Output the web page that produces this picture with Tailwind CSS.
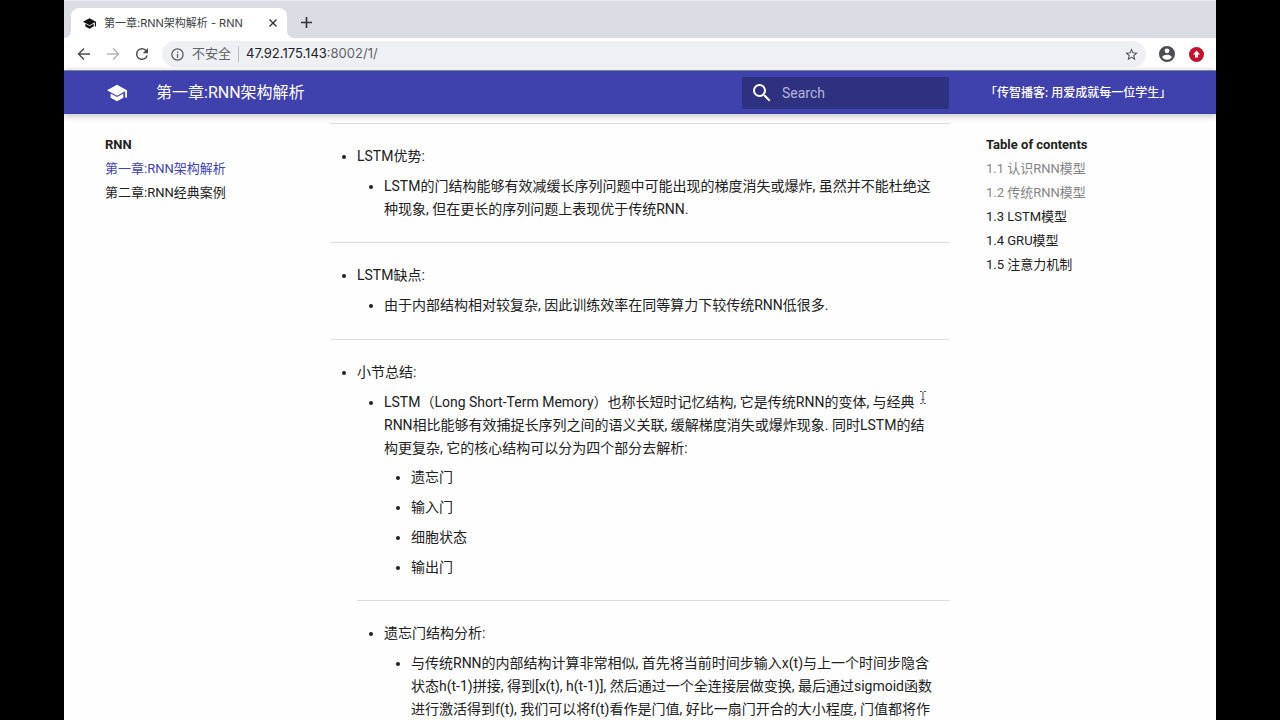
<!DOCTYPE html>
<html lang="zh-CN">
<head>
<meta charset="utf-8">
<meta name="viewport" content="width=device-width, initial-scale=1">
<title>第一章:RNN架构解析 - RNN</title>
<script src="https://cdn.jsdelivr.net/npm/@tailwindcss/browser@4"></script>
</head>
<body class="flex h-screen flex-col overflow-hidden bg-black px-16 font-[Roboto,'Noto_Sans_CJK_SC',sans-serif] text-[#212121]">

<!-- Browser window -->
<div class="flex h-[38px] shrink-0 items-end border-t border-[#e6e8ec] bg-[#dadce4] font-[Inter,'Noto_Sans_CJK_SC',sans-serif]">
  <svg class="h-[7px] w-[7px] shrink-0" viewBox="0 0 7 7" fill="#fff"><path d="M7 0v7H0A7 7 0 0 0 7 0Z"/></svg>
  <div class="flex h-[30px] w-[216px] shrink-0 items-center rounded-t-lg bg-white pr-[6px] pl-3">
    <svg class="mr-2 h-[13px] w-[13px] shrink-0" viewBox="1 1 22 22" fill="#111"><path d="M12 3 1 9l11 6 9-4.910V17h2V9M5 12.600v4.600L12 21l7-3.800v-4.600L12 16.400Z"/></svg>
    <span class="flex-1 whitespace-nowrap text-[11px] text-[#3c4043]">第一章:RNN架构解析 - RNN</span>
    <button class="flex h-4 w-4 items-center justify-center" aria-label="关闭标签页"><svg class="h-2 w-2" viewBox="0 0 8 8" stroke="#303236" stroke-width="1.4"><path d="M.5.5l7 7M7.500.5l-7 7"/></svg></button>
  </div>
  <svg class="h-[7px] w-[7px] shrink-0" viewBox="0 0 7 7" fill="#fff"><path d="M0 0v7h7A7 7 0 0 1 0 0Z"/></svg>
  <button class="ml-1 flex h-8 w-4 items-center justify-center" aria-label="新标签页"><svg class="h-[11px] w-[11px]" viewBox="0 0 11 11" stroke="#303236" stroke-width="1.6"><path d="M5.500 0v11M0 5.500h11"/></svg></button>
</div>
<div class="flex h-[33px] shrink-0 items-center border-b border-[#8d92a8] bg-white pr-3 pl-3 font-[Inter,'Noto_Sans_CJK_SC',sans-serif]">
  <button class="flex h-4 w-4 items-center justify-center" aria-label="后退"><svg class="h-4 w-4" viewBox="0 0 16 16" fill="none" stroke="#4a4d52" stroke-width="1.5"><path d="M14 8H3M8 2.500 2.500 8 8 13.500"/></svg></button>
  <button class="ml-[13px] flex h-4 w-4 items-center justify-center" aria-label="前进"><svg class="h-4 w-4" viewBox="0 0 16 16" fill="none" stroke="#b4b6ba" stroke-width="1.5"><path d="M2 8h11M8 2.500 13.500 8 8 13.500"/></svg></button>
  <button class="ml-[13px] flex h-4 w-4 items-center justify-center" aria-label="重新加载"><svg class="h-[18px] w-[18px] shrink-0" viewBox="0 0 24 24" fill="#4a4d52"><path d="M17.650 6.350A7.960 7.960 0 0 0 12 4a8 8 0 1 0 7.730 10h-2.080A6 6 0 1 1 12 6c1.660 0 3.140.69 4.220 1.780L13 11h7V4l-2.350 2.350Z"/></svg></button>
  <div class="ml-3 flex h-[26px] min-w-0 flex-1 items-center rounded-full bg-[#eff0f4] pr-[7px] pl-2">
    <svg class="h-[15px] w-[15px] shrink-0" viewBox="0 0 24 24" fill="#55585d"><path d="M11 17h2v-6h-2v6Zm0-8h2V7h-2v2Zm1-7a10 10 0 1 0 0 20 10 10 0 0 0 0-20Zm0 18a8 8 0 1 1 0-16 8 8 0 0 1 0 16Z"/></svg>
    <span class="ml-[7px] text-[13px] text-[#5f6368]">不安全</span>
    <span class="mx-[7px] h-4 w-px bg-[#b9bcc2]"></span>
    <div class="flex-1 text-[13px] text-[#606368]" role="textbox" aria-label="地址" tabindex="0"><span class="text-[#202124]">47.92.175.143</span>:8002/1/</div>
    <button class="flex h-4 w-4 items-center justify-center" aria-label="收藏"><svg class="h-[15px] w-[15px] shrink-0" viewBox="0 0 24 24" fill="#4a4d52"><path d="m22 9.240-7.190-.62L12 2 9.190 8.630 2 9.240l5.460 4.730L5.820 21 12 17.270 18.180 21l-1.630-7.030L22 9.240ZM12 15.400l-3.760 2.270 1-4.280-3.320-2.880 4.380-.38L12 6.100l1.710 4.040 4.380.38-3.320 2.880 1 4.280L12 15.400Z"/></svg></button>
  </div>
  <button class="ml-3 flex h-[18px] w-[18px] items-center justify-center" aria-label="用户"><svg class="h-4 w-4" viewBox="2 2 20 20" fill="#4a4d52"><path d="M12 2a10 10 0 1 0 0 20 10 10 0 0 0 0-20Zm0 3a3 3 0 1 1 0 6 3 3 0 0 1 0-6Zm0 14.200a7.200 7.200 0 0 1-6-3.220c.03-1.990 4-3.080 6-3.080s5.970 1.090 6 3.080a7.200 7.200 0 0 1-6 3.220Z"/></svg></button>
  <button class="ml-3 flex h-4 w-4 items-center justify-center" aria-label="更新"><svg class="h-[15px] w-[15px] shrink-0" viewBox="0 0 15 15"><circle cx="7.500" cy="7.500" r="7.500" fill="#c5112b"/><path fill="#fff" d="M7.500 3.500 11 7.500H9v3H6v-3H4Z"/></svg></button>
</div>

<!-- Site header -->
<header class="z-10 flex h-[43px] shrink-0 items-center bg-[#3f41ad] pr-[51px] pl-[43px] text-white shadow-[0_1px_7px_rgba(0,0,0,0.3)]">
  <a href="#" aria-label="RNN"><svg class="h-5 w-5" viewBox="1 1 22 22" fill="#fff"><path d="M12 3 1 9l11 6 9-4.910V17h2V9M5 12.600v4.600L12 21l7-3.800v-4.600L12 16.400Z"/></svg></a>
  <span class="ml-[29px] flex-1 text-[16px]">第一章:RNN架构解析</span>
  <div class="flex h-8 w-[207px] items-center rounded-xs bg-[#2e3080] pl-[10px]">
    <svg class="h-5 w-5 shrink-0" viewBox="2 2 20 20" fill="#fff"><path d="M9.500 3A6.500 6.500 0 0 1 16 9.500c0 1.610-.59 3.090-1.560 4.230l.27.27h.79l5 5-1.500 1.500-5-5v-.79l-.27-.27A6.520 6.520 0 0 1 9.500 16a6.500 6.500 0 1 1 0-13m0 2a4.500 4.500 0 1 0 0 9 4.500 4.500 0 0 0 0-9Z"/></svg>
    <input class="ml-[10px] w-full min-w-0 bg-transparent text-[14px] leading-6 outline-none placeholder:text-[#b4b5dc]" type="text" placeholder="Search" aria-label="Search">
  </div>
  <a href="#" class="ml-9 w-[180px] whitespace-nowrap text-[12px] font-medium">「传智播客: 用爱成就每一位学生」</a>
</header>

<div class="flex min-h-0 flex-1 overflow-hidden bg-[#fefefe] pl-[41px]">
  <nav class="w-[225px] shrink-0 pt-[19px] text-[13px] leading-6" aria-label="RNN">
    <div class="font-bold">RNN</div>
    <a href="#" class="block text-[#3f41b5]">第一章:RNN架构解析</a>
    <a href="#" class="block">第二章:RNN经典案例</a>
  </nav>

  <main class="relative min-w-0 flex-1 pt-[9px] text-[14px] leading-[23px]">
    <hr class="border-[#dcdcdc]">
    <ul class="my-[21px] ml-[27px] list-disc">
      <li>LSTM优势:
        <ul class="mt-[7px] ml-[27px] list-disc">
          <li>LSTM的门结构能够有效减缓长序列问题中可能出现的梯度消失或爆炸, 虽然并不能杜绝这<br>种现象, 但在更长的序列问题上表现优于传统RNN.</li>
        </ul>
      </li>
    </ul>
    <hr class="border-[#dcdcdc]">
    <ul class="mt-[21px] mb-[22px] ml-[27px] list-disc">
      <li>LSTM缺点:
        <ul class="mt-[7px] ml-[27px] list-disc">
          <li>由于内部结构相对较复杂, 因此训练效率在同等算力下较传统RNN低很多.</li>
        </ul>
      </li>
    </ul>
    <hr class="border-[#dcdcdc]">
    <ul class="mt-[21px] ml-[27px] list-disc">
      <li>小节总结:
        <ul class="mt-[7px] ml-[27px] list-disc">
          <li>LSTM（Long Short-Term Memory）也称长短时记忆结构, 它是传统RNN的变体, 与经典<br>RNN相比能够有效捕捉长序列之间的语义关联, 缓解梯度消失或爆炸现象. 同时LSTM的结<br>构更复杂, 它的核心结构可以分为四个部分去解析:
            <ul class="mt-[6px] ml-[27px] list-disc space-y-[7px]">
              <li>遗忘门</li>
              <li>输入门</li>
              <li>细胞状态</li>
              <li>输出门</li>
            </ul>
          </li>
        </ul>
        <hr class="my-[21px] border-[#dcdcdc]">
        <ul class="ml-[27px] list-disc">
          <li>遗忘门结构分析:
            <ul class="mt-[7px] ml-[27px] list-disc">
              <li>与传统RNN的内部结构计算非常相似, 首先将当前时间步输入x(t)与上一个时间步隐含<br>状态h(t-1)拼接, 得到[x(t), h(t-1)], 然后通过一个全连接层做变换, 最后通过sigmoid函数<br>进行激活得到f(t), 我们可以将f(t)看作是门值, 好比一扇门开合的大小程度, 门值都将作</li>
            </ul>
          </li>
        </ul>
      </li>
    </ul>
    <!-- Text pointer -->
    <svg class="absolute top-[277px] right-[23px] h-[13px] w-[8px]" viewBox="0 0 8 13" fill="none" stroke="#555" stroke-width="1"><path d="M1 .5h2l1 1 1-1h2M4 1.500v10M1 12.500h2l1-1 1 1h2M2.500 8.500h3"/></svg>
  </main>

  <nav class="ml-9 w-[230px] shrink-0 pt-[19px] text-[13px] leading-6" aria-label="Table of contents">
    <div class="font-bold">Table of contents</div>
    <a href="#" class="block text-[#858585]">1.1 认识RNN模型</a>
    <a href="#" class="block text-[#858585]">1.2 传统RNN模型</a>
    <a href="#" class="block">1.3 LSTM模型</a>
    <a href="#" class="block">1.4 GRU模型</a>
    <a href="#" class="block">1.5 注意力机制</a>
  </nav>
</div>
</body>
</html>
